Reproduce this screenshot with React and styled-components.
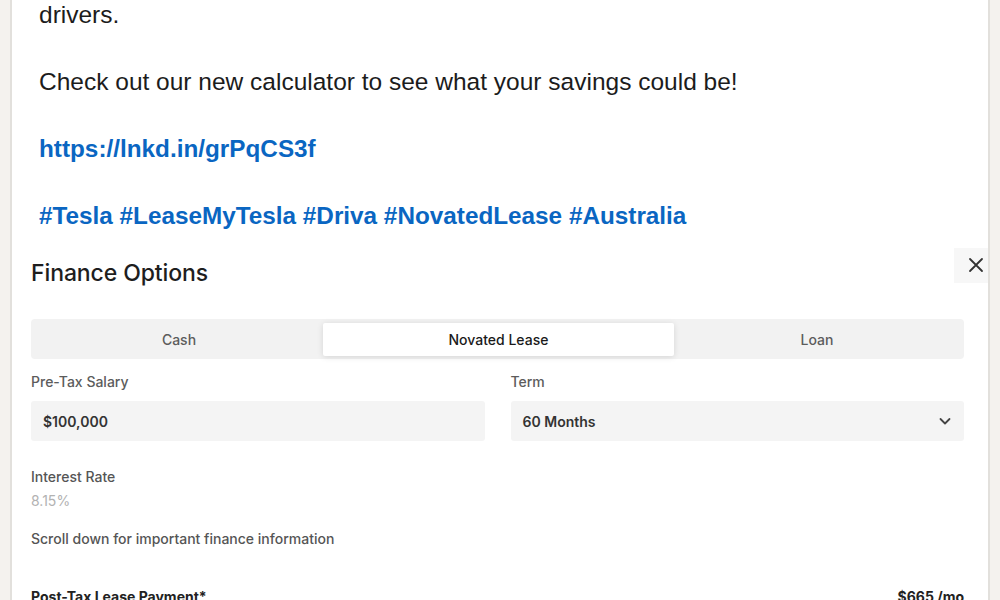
import React from "react";
import styled, { createGlobalStyle } from "styled-components";

const GlobalStyle = createGlobalStyle`
  html, body {
    margin: 0;
    padding: 0;
    background: #f4f2ee;
    overflow: hidden;
  }
  * { box-sizing: border-box; }
`;

const Page = styled.div`
  display: flex;
  width: 1000px;
  height: 600px;
  overflow: hidden;
  background: #f4f2ee;
`;

const Gutter = styled.div`
  flex: 0 0 ${(p) => p.w}px;
  background: #f4f2ee;
  border-${(p) => p.side}: 2px solid #e2e0dc;
`;

const Card = styled.div`
  flex: 1;
  background: #ffffff;
  display: flex;
  flex-direction: column;
`;

const PostBody = styled.div`
  padding: 0 27px;
  margin-top: -1px;
  font-family: "Liberation Sans", Arial, sans-serif;
  font-size: 24.5px;
  line-height: 32px;
  color: #1c1c1c;

  p {
    margin: 0 0 35px;
  }
  p:last-child {
    margin-bottom: 0;
  }
`;

const Link = styled.p`
  color: #0a66c2;
  font-weight: 700;
  font-size: 24.3px;
`;

const Finance = styled.div`
  padding: 23px 0 0 19px;
  font-family: Inter, "Liberation Sans", sans-serif;
  color: #222;
`;

const Header = styled.div`
  display: flex;
  justify-content: space-between;
  align-items: flex-start;
  height: 64px;
`;

const Title = styled.h2`
  margin: 4px 0 0;
  font-size: 23px;
  font-weight: 500;
  letter-spacing: -0.1px;
  color: #1e1e1e;
`;

const Close = styled.button`
  width: 34px;
  height: 35px;
  margin-top: -7px;
  border: none;
  background: #f7f7f7;
  display: flex;
  align-items: center;
  justify-content: center;
  padding: 0 0 2px 10px;
  color: #333;
`;

const Inner = styled.div`
  padding-right: 24px;
`;

const Tabs = styled.div`
  display: grid;
  grid-template-columns: 288fr 351fr 286fr;
  height: 40px;
  padding: 4px;
  background: #f2f2f2;
  border-radius: 4px;
`;

const Tab = styled.div`
  display: flex;
  align-items: center;
  justify-content: center;
  font-size: 14px;
  font-weight: 500;
  color: ${(p) => (p.active ? "#1a1a1a" : "#5c5c5c")};
  background: ${(p) => (p.active ? "#fff" : "transparent")};
  box-shadow: ${(p) => (p.active ? "0 1px 6px rgba(0,0,0,0.12)" : "none")};
  height: 33px;
  margin-top: -0.5px;
  border-radius: 2px;
`;

const Row = styled.div`
  display: grid;
  grid-template-columns: 1fr 1fr;
  column-gap: 26px;
  margin-top: 14px;
`;

const Field = styled.div`
  display: flex;
  flex-direction: column;
`;

const Label = styled.div`
  font-size: 14px;
  font-weight: 500;
  line-height: 18px;
  color: #5c5c5c;
  margin-bottom: ${(p) => p.mb || 0}px;
`;

const Input = styled.div`
  height: 40px;
  background: #f4f4f4;
  border-radius: 3px;
  padding: 0 12px;
  display: flex;
  align-items: center;
  justify-content: space-between;
  font-size: 14px;
  font-weight: 600;
  color: #333;
`;

const Value = styled.div`
  font-size: 14px;
  line-height: 18px;
  color: #b2b2b2;
  margin-top: 6px;
`;

const Note = styled.div`
  font-size: 14px;
  font-weight: 500;
  line-height: 18px;
  color: #555;
  margin-top: ${(p) => p.mt}px;
`;

const Total = styled.div`
  display: flex;
  justify-content: space-between;
  margin-top: 40px;
  font-size: 14px;
  font-weight: 700;
  line-height: 18px;
  color: #222;
`;

export default function App() {
  return (
    <Page>
      <GlobalStyle />
      <Gutter w={12} side="right" />
      <Card>
        <PostBody>
          <p>drivers.</p>
          <p>Check out our new calculator to see what your savings could be!</p>
          <Link>https://lnkd.in/grPqCS3f</Link>
          <Link>#Tesla #LeaseMyTesla #Driva #NovatedLease #Australia</Link>
        </PostBody>
        <Finance>
          <Header>
            <Title>Finance Options</Title>
            <Close aria-label="Close">
              <svg width="16" height="16" viewBox="0 0 16 16" fill="none" stroke="#333" strokeWidth="1.8" strokeLinecap="round">
                <path d="M2 2l12 12M14 2L2 14" />
              </svg>
            </Close>
          </Header>
          <Inner>
            <Tabs>
              <Tab>Cash</Tab>
              <Tab active>Novated Lease</Tab>
              <Tab>Loan</Tab>
            </Tabs>
            <Row>
              <Field>
                <Label mb={10}>Pre-Tax Salary</Label>
                <Input>$100,000</Input>
              </Field>
              <Field>
                <Label mb={10}>Term</Label>
                <Input>
                  60 Months
                  <svg width="14" height="14" viewBox="0 0 14 14" fill="none" stroke="#444" strokeWidth="1.8" strokeLinecap="round" strokeLinejoin="round">
                    <path d="M2.5 5l4.5 4.5L11.5 5" />
                  </svg>
                </Input>
              </Field>
            </Row>
            <Note mt={27} as={Label}>Interest Rate</Note>
            <Value>8.15%</Value>
            <Note mt={20}>Scroll down for important finance information</Note>
            <Total>
              <span>Post-Tax Lease Payment*</span>
              <span>$665 /mo</span>
            </Total>
          </Inner>
        </Finance>
      </Card>
      <Gutter w={12} side="left" />
    </Page>
  );
}
